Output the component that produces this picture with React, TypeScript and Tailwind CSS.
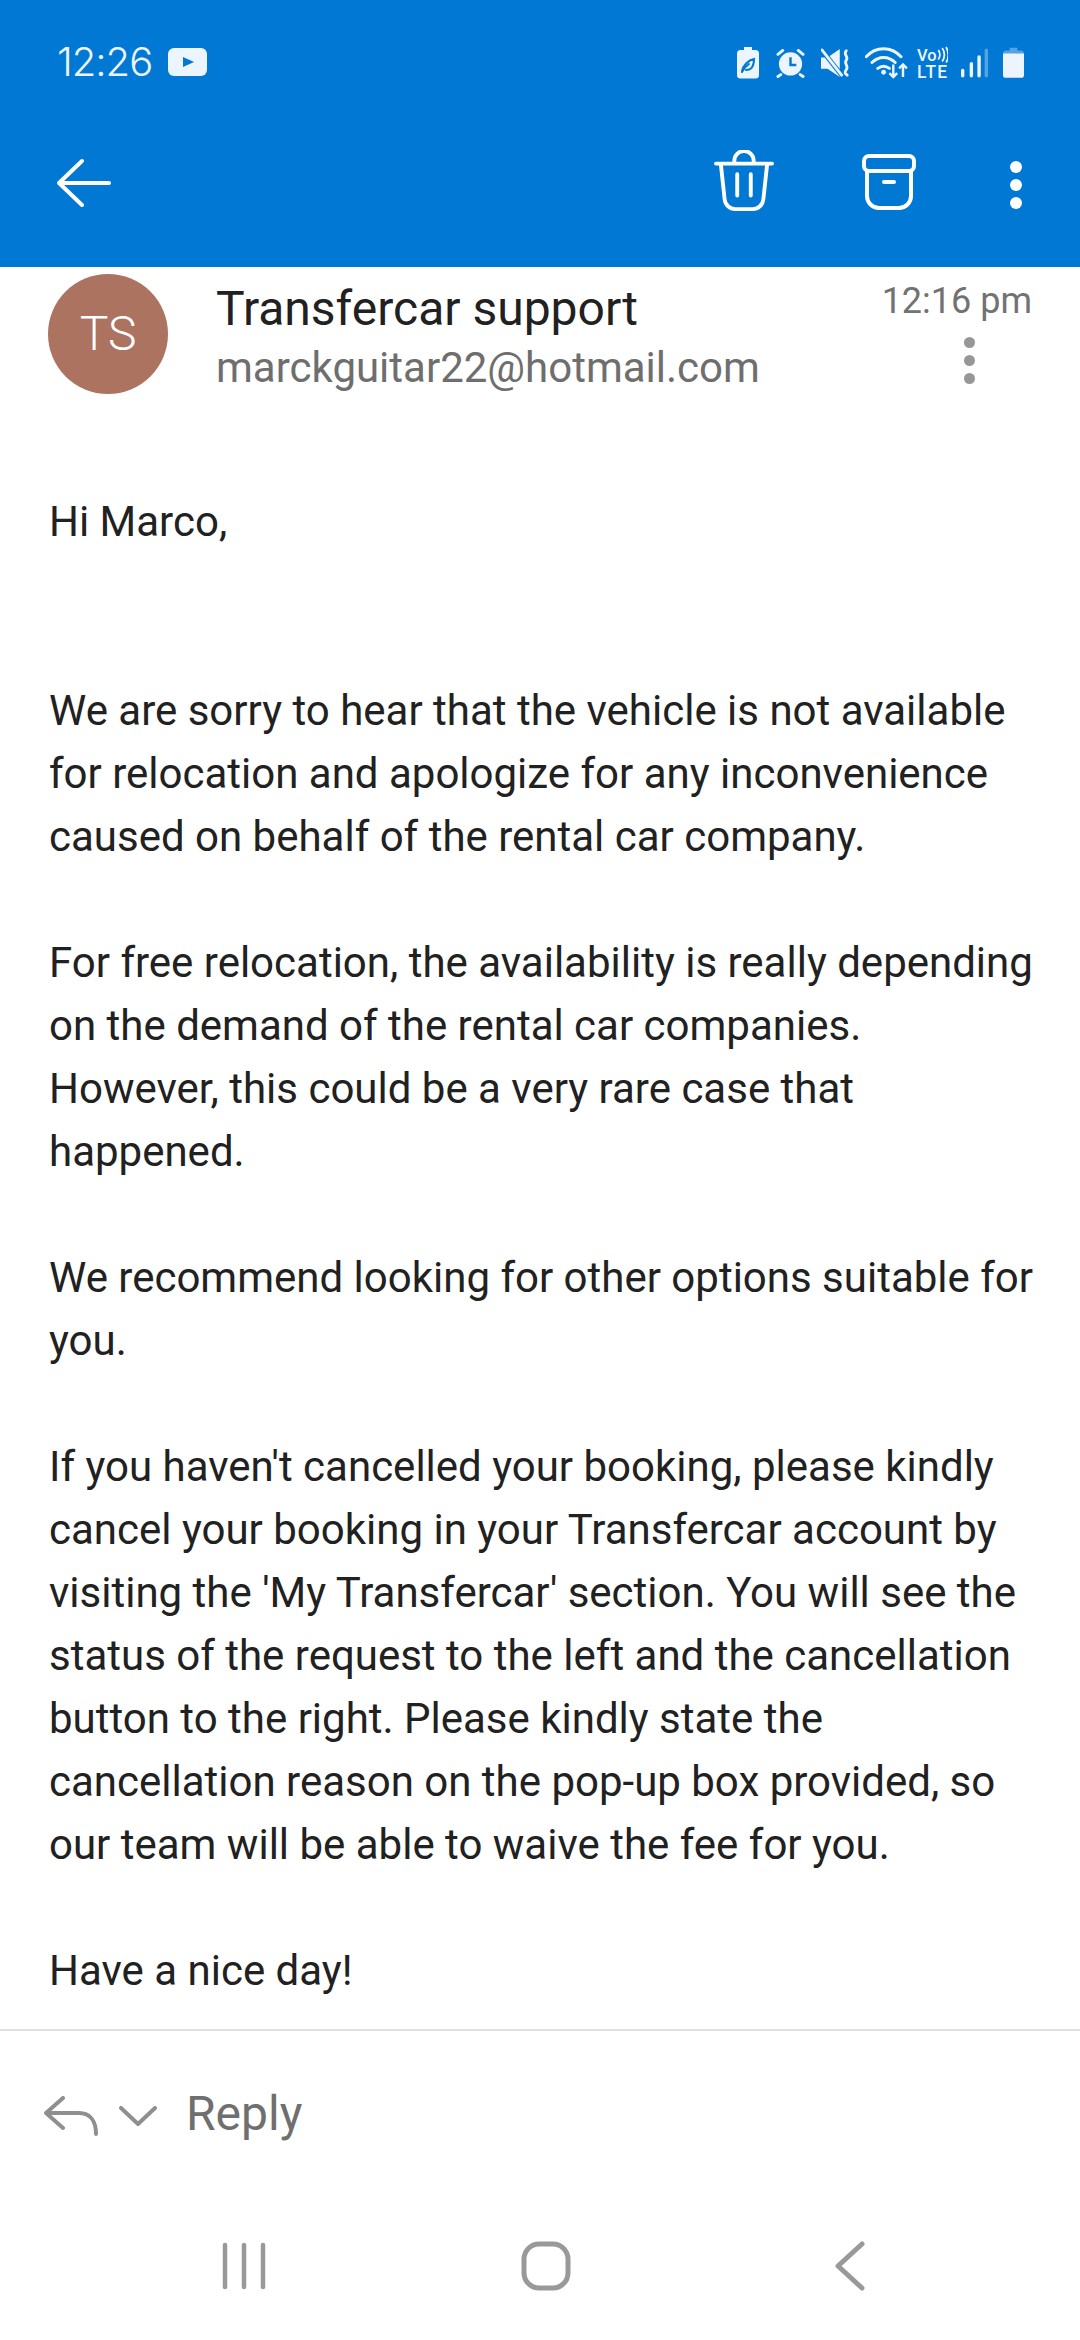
const bodyLines = [
  "Hi Marco,",
  "",
  "",
  "We are sorry to hear that the vehicle is not available",
  "for relocation and apologize for any inconvenience",
  "caused on behalf of the rental car company.",
  "",
  "For free relocation, the availability is really depending",
  "on the demand of the rental car companies.",
  "However, this could be a very rare case that",
  "happened.",
  "",
  "We recommend looking for other options suitable for",
  "you.",
  "",
  "If you haven't cancelled your booking, please kindly",
  "cancel your booking in your Transfercar account by",
  "visiting the 'My Transfercar' section. You will see the",
  "status of the request to the left and the cancellation",
  "button to the right. Please kindly state the",
  "cancellation reason on the pop-up box provided, so",
  "our team will be able to waive the fee for you.",
  "",
  "Have a nice day!",
];

const StatusIcons = () => (
  <div className="flex items-center h-[32px] text-[#ecf5fe]">
    <svg width="22" height="32" viewBox="0 0 22 32" className="mr-[17px]">
      <path d="M7 0h8v3h3.500a3.500 3.500 0 0 1 3.500 3.500V28a3.500 3.500 0 0 1-3.500 3.500h-15A3.500 3.500 0 0 1 0 28V6.500A3.500 3.500 0 0 1 3.500 3H7z" fill="currentColor" />
      <path d="M5 24c1-5 6-11 12-12 0 6-2 11-8 11M5 25c2-4 4-6 7-8" fill="none" stroke="#0078d4" strokeWidth="2" strokeLinecap="round" />
    </svg>
    <svg width="29" height="30" viewBox="0 0 30 30" className="mr-[16px]">
      <circle cx="15" cy="16" r="12" fill="currentColor" />
      <path d="M15 9v8h6" fill="none" stroke="#0078d4" strokeWidth="2.500" />
      <path d="M2 6l5-4M28 6l-5-4M5 27l-3 2M25 27l3 2" stroke="currentColor" strokeWidth="3" strokeLinecap="round" />
    </svg>
    <svg width="30" height="30" viewBox="0 0 32 30" className="mr-[14px]">
      <path d="M0 9h7L20 0v30L7 21H0z" fill="currentColor" />
      <path d="M0 0l22 28" stroke="#0078d4" strokeWidth="5" />
      <path d="M1 1l21 27" stroke="currentColor" strokeWidth="3" strokeLinecap="round" />
      <path d="M27 2c-4 4 3 6 0 10s3 6 0 10 0 5 1 6" fill="none" stroke="currentColor" strokeWidth="3" strokeLinecap="round" />
    </svg>
    <svg width="43" height="33" viewBox="0 0 44 34" className="mr-[9px]">
      <path d="M1 10c10-11 26-11 36 0M7 16c7-7 17-7 24 0M13 22c4-3 8-3 12 0" fill="none" stroke="currentColor" strokeWidth="3" strokeLinecap="round" />
      <circle cx="19" cy="26" r="2.500" fill="currentColor" />
      <path d="M29 18v13M25 27l4 4 4-4M39 31V18M35 22l4-4 4 4" fill="none" stroke="currentColor" strokeWidth="2.500" />
    </svg>
    <svg width="31" height="40" viewBox="0 -4 32 41" className="mr-[13px]">
      <text x="0" y="14" fill="currentColor" fontFamily="Roboto, sans-serif" fontSize="17" fontWeight="500">Vo</text>
      <path d="M22 3c2 3 2 7 0 10M26 1c3 4 3 10 0 14M30 0c3 5 3 12 0 16" fill="none" stroke="currentColor" strokeWidth="1.800" />
      <text x="0" y="32" fill="currentColor" fontFamily="Roboto, sans-serif" fontSize="18" fontWeight="500" textLength="31">LTE</text>
    </svg>
    <svg width="27" height="30" viewBox="0 0 28 30" className="mr-[15px]">
      <rect x="0" y="21" width="3.500" height="9" rx="1.700" fill="currentColor" />
      <rect x="9" y="14" width="3.500" height="16" rx="1.700" fill="currentColor" />
      <rect x="17" y="7" width="3.500" height="23" rx="1.700" fill="currentColor" />
      <rect x="24.500" y="0" width="3.500" height="30" rx="1.700" fill="#56a3e4" />
    </svg>
    <svg width="21" height="32" viewBox="0 0 22 32">
      <path d="M7 0h8v3h3.500A3.500 3.500 0 0 1 22 6.500V11H0V6.500A3.500 3.500 0 0 1 3.500 3H7z" fill="#56a3e4" />
      <path d="M0 6h22v22.500a3 3 0 0 1-3 3H3a3 3 0 0 1-3-3z" fill="currentColor" />
    </svg>
  </div>
);

const StatusBar = () => (
  <div className="h-[126px] flex justify-between items-start pt-[47px] pl-[57px] pr-[56px]">
    <div className="flex items-center h-[29px]">
      <span className="text-[40px] leading-[40px] text-[#ecf5fe] font-['Inter',sans-serif] font-light tracking-[-1px]">12:26</span>
      <svg width="39" height="28" viewBox="0 0 39 28" className="ml-[16px]">
        <rect width="39" height="28" rx="6" fill="#ecf5fe" />
        <path d="M15 9l11 5-11 5z" fill="#0078d4" />
      </svg>
    </div>
    <StatusIcons />
  </div>
);

const Toolbar = () => (
  <div className="h-[141px] flex items-start justify-between pl-[56px] pr-[58px] pt-[24px]">
    <svg width="56" height="50" viewBox="0 0 56 50" fill="none" stroke="white" strokeWidth="4" strokeLinecap="round" strokeLinejoin="round" className="mt-[8px]">
      <path d="M26 3L3 25l23 22M3 25h50" />
    </svg>
    <div className="flex items-start">
      <svg width="60" height="62" viewBox="0 0 62 64" fill="none" stroke="white" strokeWidth="4" strokeLinecap="round" strokeLinejoin="round" className="mr-[88px]">
        <path d="M2 14h58M21 14v-3a10 10 0 0 1 20 0v3M7 14l4 37a11 11 0 0 0 11 10h18a11 11 0 0 0 11-10l4-37M24 25v22M38 25v22" />
      </svg>
      <svg width="54" height="56" viewBox="0 0 54 56" fill="none" stroke="white" strokeWidth="4" strokeLinecap="round" strokeLinejoin="round" className="mr-[94px] mt-[4px]">
        <rect x="2" y="2" width="50" height="15" rx="5" />
        <path d="M5 17v25a12 12 0 0 0 12 12h20a12 12 0 0 0 12-12V17M22 28h10" />
      </svg>
      <div className="flex flex-col gap-[6px] mt-[11px]">
        <span className="w-[12px] h-[12px] rounded-full bg-white" />
        <span className="w-[12px] h-[12px] rounded-full bg-white" />
        <span className="w-[12px] h-[12px] rounded-full bg-white" />
      </div>
    </div>
  </div>
);

const MessageHeader = () => (
  <div className="flex items-start pl-[48px] pr-[48px] pt-[7px]">
    <div className="w-[120px] h-[120px] rounded-full bg-[#ac7360] flex items-center justify-center text-white text-[48px] font-light">
      TS
    </div>
    <div className="ml-[49px] flex-1">
      <div className="text-[48px] leading-[60px] text-[#212121] mt-[5px] -ml-[1px]">Transfercar support</div>
      <div className="text-[42px] leading-[54px] text-[#6e6e6e] mt-[2px] -ml-[1px]">marckguitar22@hotmail.com</div>
    </div>
    <div className="flex flex-col items-end">
      <span className="text-[36px] leading-[44px] text-[#727272] mt-[5px]">12:16 pm</span>
      <div className="flex flex-col gap-[7px] mr-[57px] mt-[14px]">
        <span className="w-[11px] h-[11px] rounded-full bg-[#979797]" />
        <span className="w-[11px] h-[11px] rounded-full bg-[#979797]" />
        <span className="w-[11px] h-[11px] rounded-full bg-[#979797]" />
      </div>
    </div>
  </div>
);

const ReplyBar = () => (
  <div className="h-[167px] border-t-2 border-[#e0e0e0] flex items-start pl-[44px] pt-[53px]">
    <svg width="56" height="42" viewBox="0 0 56 42" fill="none" stroke="#8f8f8f" strokeWidth="4" strokeLinecap="round" strokeLinejoin="round" className="mt-[12px]">
      <path d="M19 2L2 17l17 15M2 17h33c11 0 17 8 17 21" />
    </svg>
    <svg width="38" height="22" viewBox="0 0 38 22" fill="none" stroke="#8f8f8f" strokeWidth="4" strokeLinecap="round" strokeLinejoin="round" className="ml-[19px] mt-[22px]">
      <path d="M2 2l17 16L36 2" />
    </svg>
    <span className="ml-[29px] text-[48px] leading-[60px] text-[#6f6f6f]">Reply</span>
  </div>
);

const NavBar = () => (
  <div className="h-[144px] flex items-start pt-[46px] pl-[222px]">
    <svg width="46" height="48" viewBox="0 0 46 48" fill="none" stroke="#999999" strokeWidth="4.500" strokeLinecap="round">
      <path d="M3 3v42M22 3v42M41 3v42" />
    </svg>
    <svg width="50" height="50" viewBox="0 0 50 50" fill="none" stroke="#999999" strokeWidth="5" className="ml-[253px] -mt-[1px]">
      <rect x="3" y="3" width="44" height="44" rx="15" />
    </svg>
    <svg width="30" height="50" viewBox="0 0 30 50" fill="none" stroke="#999999" strokeWidth="5" strokeLinecap="round" strokeLinejoin="round" className="ml-[264px] -mt-[1px]">
      <path d="M27 3L3 25l24 22" />
    </svg>
  </div>
);

export default function App() {
  return (
    <div className="w-[1080px] h-[2340px] bg-white flex flex-col font-['Roboto',sans-serif] overflow-hidden">
      <div className="bg-[#0078d4]">
        <StatusBar />
        <Toolbar />
      </div>
      <MessageHeader />
      <div className="flex-1 pl-[49px] pt-[95px] text-[42px] leading-[63px] text-[#212121] whitespace-nowrap">
        {bodyLines.map((line, i) => (
          <div key={i} className="h-[63px]">
            {line}
          </div>
        ))}
      </div>
      <ReplyBar />
      <NavBar />
    </div>
  );
}
